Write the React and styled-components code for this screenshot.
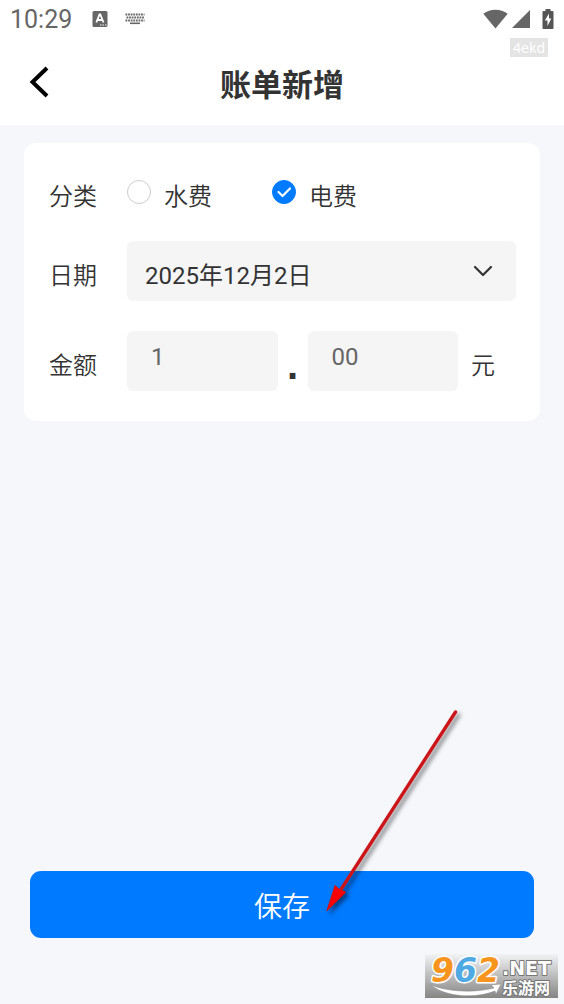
import React, { useState } from 'react';
import styled, { createGlobalStyle } from 'styled-components';

const CATEGORIES = [
  { value: 'water', label: '水费' },
  { value: 'power', label: '电费' },
];

const DATES = ['2025年12月1日', '2025年12月2日', '2025年12月3日'];

const App = () => {
  const [category, setCategory] = useState('power');
  const [date, setDate] = useState('2025年12月2日');
  const [yuan, setYuan] = useState('1');
  const [cents, setCents] = useState('00');

  return (
    <Page>
      <GlobalStyle />

      <Header>
        <StatusBar>
          <Time>10:29</Time>
          <InputMethodIcon />
          <KeyboardIcon />
          <StatusRight>
            <WifiIcon />
            <SignalIcon />
            <BatteryIcon />
          </StatusRight>
          <Tag>4ekd</Tag>
        </StatusBar>
        <NavBar>
          <BackButton type='button' aria-label='返回'>
            <svg width='20' height='32' viewBox='0 0 20 32'>
              <path
                d='M18 2 3.500 16 18 30'
                fill='none'
                stroke='#000'
                strokeWidth='4'
              />
            </svg>
          </BackButton>
          <Title>账单新增</Title>
        </NavBar>
      </Header>

      <Form onSubmit={(e) => e.preventDefault()}>
        <Card>
          <Row>
            <Label as='span' id='category-label'>
              分类
            </Label>
            <Options role='radiogroup' aria-labelledby='category-label'>
              {CATEGORIES.map(({ value, label }) => (
                <Option key={value}>
                  <RadioBox>
                    <Radio
                      type='radio'
                      name='category'
                      value={value}
                      checked={category === value}
                      onChange={() => setCategory(value)}
                    />
                    {category === value && <CheckIcon />}
                  </RadioBox>
                  <OptionText>{label}</OptionText>
                </Option>
              ))}
            </Options>
          </Row>

          <Row>
            <Label htmlFor='date'>日期</Label>
            <SelectBox>
              <Select
                id='date'
                value={date}
                onChange={(e) => setDate(e.target.value)}
              >
                {DATES.map((d) => (
                  <option key={d}>{d}</option>
                ))}
              </Select>
              <ChevronIcon />
            </SelectBox>
          </Row>

          <Row>
            <Label htmlFor='yuan'>金额</Label>
            <Amount>
              <AmountInput
                id='yuan'
                inputMode='numeric'
                value={yuan}
                onChange={(e) => setYuan(e.target.value)}
              />
              <Point>.</Point>
              <AmountInput
                aria-label='角分'
                inputMode='numeric'
                value={cents}
                onChange={(e) => setCents(e.target.value)}
              />
              <Unit>元</Unit>
            </Amount>
          </Row>
        </Card>

        <Footer>
          <SaveButton type='submit'>保存</SaveButton>
          <PointerArrow />
        </Footer>
      </Form>

      <SiteMark />
    </Page>
  );
};

// Status bar icons
const InputMethodIcon = () => (
  <svg width='16' height='18' viewBox='0 0 16 18'>
    <rect x='0.500' y='1' width='15' height='16' rx='1.500' fill='#666' />
    <path
      d='M4.300 12.500 7.500 4.500h.8l3.200 8M5.500 10h4.800'
      fill='none'
      stroke='#fff'
      strokeWidth='1.800'
    />
    <path d='M8 15h1.500M10.500 15H12M13 15h1.500' stroke='#fff' strokeWidth='1.200' />
  </svg>
);

const KeyboardIcon = () => (
  <svg width='20' height='12' viewBox='0 0 20 12'>
    <g stroke='#666' strokeWidth='1.800' strokeDasharray='1.800 0.800'>
      <path d='M0.500 1.500h19M1.500 4.500h17.500M0.500 7.500h19' />
    </g>
    <path d='M5 10.300h10' stroke='#666' strokeWidth='1.600' />
  </svg>
);

const WifiIcon = () => (
  <svg width='25' height='20' viewBox='0 0 25 20'>
    <path d='M12.500 19.500 0.300 4.800C4 2 8 .8 12.500.8s8.500 1.200 12.200 4z' fill='#666' />
  </svg>
);

const SignalIcon = () => (
  <svg width='18' height='18' viewBox='0 0 18 18'>
    <path d='M18 0v18H0z' fill='#666' />
  </svg>
);

const BatteryIcon = () => (
  <svg width='12' height='20' viewBox='0 0 12 20'>
    <path
      d='M3.500 0h5v2H10.500q1 0 1 1V19q0 1-1 1H1.500q-1 0-1-1V3q0-1 1-1h2z'
      fill='#555'
    />
    <path d='M7 4.500 2.800 11.500h2.700v5.500L9.300 9.500H7z' fill='#fff' />
  </svg>
);

const CheckIcon = () => (
  <svg width='24' height='24' viewBox='0 0 24 24'>
    <path
      d='m6.500 12 4 4 7.500-7.500'
      fill='none'
      stroke='#fff'
      strokeWidth='2.200'
      strokeLinecap='round'
      strokeLinejoin='round'
    />
  </svg>
);

const ChevronIcon = () => (
  <svg width='20' height='12' viewBox='0 0 20 12'>
    <path
      d='m2 2 8 8 8-8'
      fill='none'
      stroke='#333'
      strokeWidth='2.200'
      strokeLinecap='round'
      strokeLinejoin='round'
    />
  </svg>
);

// Red arrow pointing at the save button
const PointerArrow = () => (
  <ArrowSvg width='144' height='216' viewBox='0 0 144 216'>
    <g stroke='#cc1519' strokeLinecap='round'>
      <path d='M130.500 8 15 187' strokeWidth='3.400' />
      <path
        d='M2 206.500 10 181.500l4.500 4L20.500 188z'
        fill='#fa0000'
        strokeWidth='1'
      />
    </g>
  </ArrowSvg>
);

const SiteMark = () => (
  <MarkSvg width='133' height='44' viewBox='0 0 133 44' role='img'>
    <defs>
      <linearGradient id='markBg' x1='0' y1='0' x2='0' y2='1'>
        <stop offset='0' stopColor='#f2f3f5' />
        <stop offset='1' stopColor='#858585' />
      </linearGradient>
    </defs>
    <rect width='133' height='44' fill='url(#markBg)' />
    <path
      d='M6 31c17 7 44 8 63 3l-3-3 10-1-5 10-1-3C50 45 20 43 6 31z'
      fill='#fff'
      stroke='#888'
      strokeWidth='0.500'
    />
    <g
      fontFamily='"DejaVu Sans", sans-serif'
      fontWeight='700'
      strokeLinejoin='round'
      paintOrder='stroke'
    >
      <text
        x='6'
        y='28'
        fontSize='33'
        fontStyle='italic'
        fill='#f7941d'
        stroke='#fff'
        strokeWidth='3'
      >
        9<tspan fill='#4fa9e2'>6</tspan>2
      </text>
      <g fill='#fff' stroke='#777' strokeWidth='2'>
        <text x='77' y='21' fontSize='19'>
          .NET
        </text>
        <text
          x='77'
          y='40'
          fontSize='16'
          fontFamily='"Noto Sans CJK SC", sans-serif'
        >
          乐游网
        </text>
      </g>
    </g>
  </MarkSvg>
);

const GlobalStyle = createGlobalStyle`
  *, *::before, *::after {
    box-sizing: border-box;
  }

  body {
    margin: 0;
    background: #f5f7fb;
    color: #333;
    font-family: Roboto, "Noto Sans CJK SC", sans-serif;
  }

  button, input, select {
    font: inherit;
    color: inherit;
    border: 0;
  }

  svg {
    display: block;
    flex-shrink: 0;
  }
`;

const Page = styled.div`
  position: relative;
  display: flex;
  flex-direction: column;
  min-height: 100vh;
`;

const Header = styled.header`
  background: #fff;
`;

const StatusBar = styled.div`
  position: relative;
  display: flex;
  align-items: center;
  height: 38px;
  padding: 0 10px;
  gap: 17px;
`;

const Time = styled.span`
  margin-right: 3px;
  font-size: 25px;
  color: #666;
`;

const StatusRight = styled.div`
  display: flex;
  align-items: center;
  gap: 4px;
  margin-left: auto;

  svg:last-child {
    margin-left: 8px;
  }
`;

const Tag = styled.span`
  position: absolute;
  top: 38px;
  right: 16px;
  padding: 0 3px;
  background: #e4e4e4;
  color: #fff;
  font-family: "Noto Sans", sans-serif;
  font-size: 14px;
  line-height: 19px;
`;

const NavBar = styled.div`
  display: grid;
  grid-template-columns: 50px 1fr 50px;
  align-items: center;
  height: 87px;
`;

const BackButton = styled.button`
  padding: 0 0 0 29px;
  background: none;
  cursor: pointer;
`;

const Title = styled.h1`
  margin: 0;
  padding-top: 8px;
  font-size: 31px;
  font-weight: 700;
  line-height: 40px;
  text-align: center;
`;

const Form = styled.form`
  display: flex;
  flex: 1;
  flex-direction: column;
  justify-content: space-between;
  padding-top: 18px;
`;

const Card = styled.section`
  display: flex;
  flex-direction: column;
  gap: 30px;
  margin: 0 24px;
  padding: 30px 24px;
  border-radius: 12px;
  background: #fff;
  font-size: 24px;
`;

const Row = styled.div`
  display: grid;
  grid-template-columns: 49px minmax(0, 1fr);
  gap: 30px;
  align-items: center;
`;

const Label = styled.label`
  padding-top: 6px;
  font-family: "Noto Sans CJK SC", sans-serif;
  font-weight: 350;
  line-height: 32px;
  text-align: right;
`;

const Options = styled.div`
  display: flex;
  gap: 60px;
`;

const Option = styled.label`
  display: flex;
  align-items: center;
  gap: 13px;
`;

const OptionText = styled.span`
  padding-top: 6px;
  font-family: "Noto Sans CJK SC", sans-serif;
  font-weight: 350;
  line-height: 32px;
`;

const RadioBox = styled.span`
  display: grid;

  > * {
    grid-area: 1 / 1;
  }

  svg {
    pointer-events: none;
  }
`;

const Radio = styled.input`
  width: 24px;
  height: 24px;
  margin: 0;
  border: 1px solid #ccc;
  border-radius: 50%;
  appearance: none;
  background: #fff;

  &:checked {
    border-color: #007aff;
    background: #007aff;
  }
`;

const SelectBox = styled.div`
  display: grid;
  grid-template-columns: minmax(0, 1fr);
  align-items: center;

  > * {
    grid-area: 1 / 1;
  }

  svg {
    justify-self: end;
    margin-right: 23px;
    pointer-events: none;
  }
`;

const Select = styled.select`
  width: 100%;
  height: 60px;
  padding: 10px 48px 0 18px;
  border-radius: 6px;
  appearance: none;
  background: #f5f5f5;
`;

const Amount = styled.div`
  display: flex;
  align-items: center;
`;

const AmountInput = styled.input`
  flex: 1;
  min-width: 0;
  height: 60px;
  padding: 0 24px 9px;
  border-radius: 6px;
  background: #f5f5f5;
  color: #666;
`;

const Point = styled.span`
  width: 30px;
  padding-top: 8px;
  font-family: "Liberation Sans", Arial, sans-serif;
  font-size: 40px;
  font-weight: 700;
  line-height: 52px;
  text-align: center;
`;

const Unit = styled.span`
  width: 58px;
  padding: 6px 0 0 13px;
  font-family: "Noto Sans CJK SC", sans-serif;
  font-weight: 350;
  line-height: 32px;
`;

const Footer = styled.footer`
  position: relative;
  display: flex;
  padding: 0 30px 66px;
`;

const SaveButton = styled.button`
  flex: 1;
  height: 67px;
  border-radius: 11px;
  background: #007aff;
  color: #fff;
  font-family: "Noto Sans CJK SC", sans-serif;
  font-size: 28px;
  font-weight: 350;
  cursor: pointer;
`;

const ArrowSvg = styled.svg`
  position: absolute;
  bottom: 84px;
  left: calc(50% + 43px);
  overflow: visible;
  pointer-events: none;
  filter: drop-shadow(3px 3px 2px rgba(0, 0, 0, 0.5));
`;

const MarkSvg = styled.svg`
  position: absolute;
  right: 6px;
  bottom: 6px;
  overflow: visible;
`;

export default App;
